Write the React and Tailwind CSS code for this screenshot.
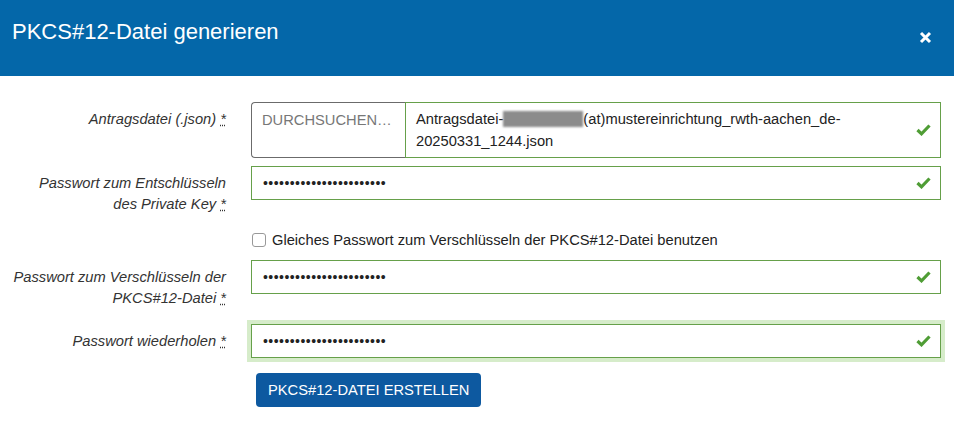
import { useState } from "react";

function Check() {
  return (
    <svg width="15" height="12" viewBox="0 0 15 12" className="shrink-0">
      <path d="M1.5 6 L5.5 9.8 L13.5 1.5" fill="none" stroke="#4f9d35" strokeWidth="3.2" />
    </svg>
  );
}

function Req() {
  return (
    <>
      {" "}
      <abbr title="Pflichtfeld" className="no-underline">
        <span className="underline decoration-dotted underline-offset-1">*</span>
      </abbr>
    </>
  );
}

function Row({ label, children, className = "" }) {
  return (
    <div className={`flex gap-[25px] pr-[13px] ${className}`}>
      <label className="w-[226px] shrink-0 text-right italic text-[#333] leading-[21px] pt-[7px]">
        {label}
      </label>
      <div className="flex-1 min-w-0">{children}</div>
    </div>
  );
}

function PasswordField({ glow }) {
  return (
    <div
      className={`flex items-center h-[34px] border border-[#66a04a] bg-white pl-[11px] pr-[9px] ${
        glow ? "shadow-[0_0_0_4px_#d6ecca]" : ""
      }`}
    >
      <span className="flex-1 text-[14px] tracking-[0.45px] text-[#222] leading-none">
        {"•".repeat(23)}
      </span>
      <Check />
    </div>
  );
}

export default function App() {
  const [same, setSame] = useState(false);

  return (
    <div className="w-[954px] h-[424px] bg-white font-['Liberation_Sans',Arial,sans-serif] text-[14.7px] overflow-hidden">
      {/* Header */}
      <div className="h-[76px] bg-[#0467a9] flex items-start justify-between pl-3 pr-[22px] pt-[19px]">
        <h1 className="text-[22px] leading-[26px] text-white">PKCS#12-Datei generieren</h1>
        <button className="mt-[12px]" aria-label="Schließen">
          <svg width="13" height="13" viewBox="0 0 13 13">
            <path d="M2 2 L11 11 M11 2 L2 11" stroke="white" strokeWidth="3" />
          </svg>
        </button>
      </div>

      {/* Form */}
      <div className="pt-[26px]">
        <Row label={<>Antragsdatei (.json)<Req /></>} className="[&>label]:pt-[6px] [&>label]:leading-[22px]">
          <div className="flex h-[56px]">
            <div className="w-[154px] shrink-0 border border-r-0 border-[#6b6b6b] rounded-l-[4px] px-[10px] pt-[6px] leading-[22px] text-[#777] whitespace-nowrap overflow-hidden">
              DURCHSUCHEN…
            </div>
            <div className="flex-1 flex items-center border border-[#66a04a] pl-[10px] pr-[9px]">
              <div className="flex-1 leading-[22px] text-[#222]">
                Antragsdatei-
                <span className="inline-block align-middle w-[80px] h-[16px] bg-[#8c8c8c] blur-[1px] -mt-[2px]" />
                (at)mustereinrichtung_rwth-aachen_de-
                <br />
                20250331_1244.json
              </div>
              <Check />
            </div>
          </div>
        </Row>

        <Row
          label={
            <>
              Passwort zum Entschlüsseln
              <br />
              des Private Key<Req />
            </>
          }
          className="mt-[8px]"
        >
          <PasswordField />
        </Row>

        <div className="flex gap-[25px] pr-[13px] mt-[15px]">
          <div className="w-[226px] shrink-0" />
          <label className="flex items-center gap-[6px] h-[20px] text-[#222]">
            <input
              type="checkbox"
              checked={same}
              onChange={(e) => setSame(e.target.checked)}
              className="appearance-none w-[14px] h-[14px] border border-[#999] rounded-[3px] bg-white ml-[1px]"
            />
            Gleiches Passwort zum Verschlüsseln der PKCS#12-Datei benutzen
          </label>
        </div>

        <Row
          label={
            <>
              Passwort zum Verschlüsseln der
              <br />
              PKCS#12-Datei<Req />
            </>
          }
          className="mt-[10px]"
        >
          <PasswordField />
        </Row>

        <Row label={<>Passwort wiederholen<Req /></>} className="mt-[15px]">
          <PasswordField glow />
        </Row>

        <div className="flex gap-[25px] mt-[15px]">
          <div className="w-[226px] shrink-0" />
          <button className="ml-[5px] h-[34px] px-3 rounded-[4px] bg-[#0d59a0] text-white text-[14.7px] uppercase">
            PKCS#12-Datei erstellen
          </button>
        </div>
      </div>
    </div>
  );
}
